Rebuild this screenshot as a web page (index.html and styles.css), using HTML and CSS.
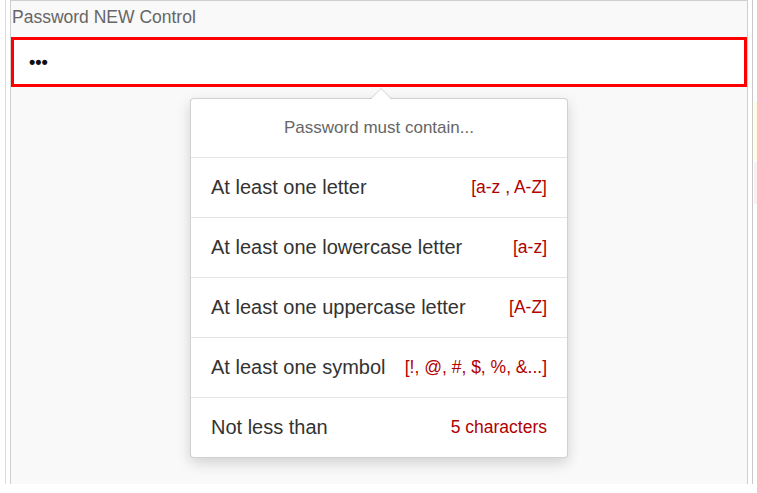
FILE: index.html
```html
<!DOCTYPE html>
<html>
<head>
<meta charset="utf-8">
<link rel="stylesheet" href="styles.css">
</head>
<body>
<div class="page">
  <div class="outer">
    <div class="panel">
      <div class="label">Password NEW Control</div>
      <div class="field">•••</div>
      <div class="popover">
        <div class="arrow"></div>
        <div class="pop-head">Password must contain...</div>
        <div class="rule"><span class="rule-name">At least one letter</span><span class="rule-val">[a-z , A-Z]</span></div>
        <div class="rule"><span class="rule-name">At least one lowercase letter</span><span class="rule-val">[a-z]</span></div>
        <div class="rule"><span class="rule-name">At least one uppercase letter</span><span class="rule-val">[A-Z]</span></div>
        <div class="rule"><span class="rule-name">At least one symbol</span><span class="rule-val">[!, @, #, $, %, &amp;...]</span></div>
        <div class="rule"><span class="rule-name">Not less than</span><span class="rule-val">5 characters</span></div>
      </div>
    </div>
  </div>
  <div class="side">
    <div class="side-warn"></div>
    <div class="side-err"></div>
  </div>
</div>
</body>
</html>
```

FILE: styles.css
```css
html, body {
  margin: 0;
  padding: 0;
  background: #fff;
  font-family: "Liberation Sans", Arial, sans-serif;
}
.page {
  display: flex;
  width: 757px;
  height: 493px;
  overflow: hidden;
}
.outer {
  flex: none;
  margin-left: 5px;
  width: 738px;
  height: 484px;
  border-left: 1px solid #dcdcdc;
  border-right: 1px solid #c8c8c8;
  padding-left: 4px;
  padding-right: 4px;
}
.panel {
  position: relative;
  height: 484px;
  box-sizing: border-box;
  background: #f9f9f9;
  border: 1px solid #cfcfcf;
  border-bottom: none;
}
.label {
  padding: 6px 0 0 1px;
  height: 36px;
  box-sizing: border-box;
  font-size: 17.5px;
  line-height: 20px;
  color: #666;
}
.field {
  height: 50px;
  box-sizing: border-box;
  border: 3px solid #f00;
  background: #fff;
  padding: 0 0 0 15px;
  font-size: 18px;
  font-weight: bold;
  line-height: 44px;
  color: #111;
}
.popover {
  position: absolute;
  left: 179px;
  top: 97px;
  width: 378px;
  box-sizing: border-box;
  background: #fff;
  border: 1px solid rgba(0,0,0,0.18);
  border-radius: 4px;
  box-shadow: 0 5px 14px rgba(0,0,0,0.16);
}
.arrow {
  position: absolute;
  left: 179px;
  top: -11px;
  width: 0;
  height: 0;
  border-left: 11px solid transparent;
  border-right: 11px solid transparent;
  border-bottom: 11px solid rgba(0,0,0,0.14);
}
.arrow::after {
  content: "";
  position: absolute;
  left: -10px;
  top: 1px;
  border-left: 10px solid transparent;
  border-right: 10px solid transparent;
  border-bottom: 10px solid #fff;
}
.pop-head {
  height: 58px;
  display: flex;
  align-items: center;
  justify-content: center;
  font-size: 17px;
  color: #666;
}
.rule {
  height: 60px;
  box-sizing: border-box;
  border-top: 1px solid #e5e5e5;
  display: flex;
  align-items: center;
  justify-content: space-between;
  padding: 0 20px;
}
.rule-name {
  font-size: 20px;
  color: #333;
}
.rule-val {
  font-size: 17.5px;
  color: #b00000;
}
.side {
  flex: none;
  margin-left: 1px;
  padding-top: 102px;
  width: 3px;
}
.side-warn {
  height: 58px;
  background: #fffbe6;
}
.side-err {
  height: 42px;
  background: #fdf0f0;
  margin-top: 2px;
}
```
